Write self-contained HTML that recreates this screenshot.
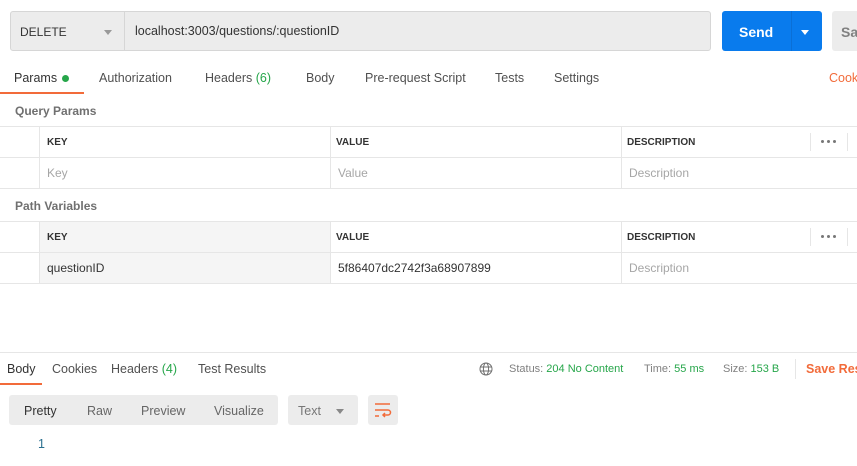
<!DOCTYPE html>
<html><head><style>
*{box-sizing:border-box;margin:0;padding:0}
body{width:857px;height:466px;overflow:hidden;background:#fff;font-family:"Liberation Sans",sans-serif;font-size:12px;color:#505050;position:relative}
.a{position:absolute;white-space:nowrap}
.hl{position:absolute;height:1px;background:#e6e6e6}
.vl{position:absolute;width:1px;background:#e6e6e6}
.th{font-size:10px;font-weight:bold;color:#333}
.ph{color:#a6a6a6}
.g{color:#26a64a}
.d{position:absolute;width:3px;height:3px;border-radius:50%;background:#777}
</style></head><body>
<div class="a" style="left:10px;top:11px;width:701px;height:40px;background:#ececec;border:1px solid #d6d6d6;border-radius:3px"></div>
<div class="vl" style="left:124px;top:12px;height:38px;background:#d6d6d6"></div>
<div class="a" style="left:20px;top:25px;font-size:12px;color:#333">DELETE</div>
<div class="a" style="left:104px;top:30px;width:0;height:0;border-left:4px solid transparent;border-right:4px solid transparent;border-top:5px solid #999"></div>
<div class="a" style="left:135px;top:24px;font-size:12.5px;color:#333">localhost:3003/questions/:questionID</div>
<div class="a" style="left:722px;top:11px;width:100px;height:40px;background:#097bed;border-radius:3px"></div>
<div class="vl" style="left:791px;top:11px;height:40px;background:#0a6fd6"></div>
<div class="a" style="left:739px;top:24px;font-size:14px;font-weight:bold;color:#fff">Send</div>
<div class="a" style="left:801px;top:30px;width:0;height:0;border-left:4.5px solid transparent;border-right:4.5px solid transparent;border-top:5px solid #fff"></div>
<div class="a" style="left:832px;top:11px;width:40px;height:40px;background:#ececec;border-radius:3px"></div>
<div class="a" style="left:841px;top:24px;font-size:14px;font-weight:bold;color:#808080">Sa</div>
<div class="a" style="left:14px;top:71px;color:#333;font-size:12.5px">Params</div>
<div class="a" style="left:62px;top:75px;width:7px;height:7px;border-radius:50%;background:#26a64a"></div>
<div class="a" style="left:0;top:92px;width:84px;height:2px;background:#f26b3a"></div>
<div class="a" style="left:99px;top:71px;font-size:12.5px">Authorization</div>
<div class="a" style="left:205px;top:71px;font-size:12.5px">Headers <span class="g">(6)</span></div>
<div class="a" style="left:306px;top:71px;font-size:12.5px">Body</div>
<div class="a" style="left:365px;top:71px;font-size:12.5px">Pre-request Script</div>
<div class="a" style="left:495px;top:71px;font-size:12.5px">Tests</div>
<div class="a" style="left:554px;top:71px;font-size:12.5px">Settings</div>
<div class="a" style="left:829px;top:71px;font-size:12.5px;color:#f26b3a">Cook</div>
<div class="a" style="left:15px;top:104px;font-weight:bold;color:#707070">Query Params</div>
<div class="hl" style="left:0;top:126px;width:857px"></div>
<div class="hl" style="left:0;top:157px;width:857px"></div>
<div class="hl" style="left:0;top:188px;width:857px"></div>
<div class="vl" style="left:39px;top:126px;height:62px"></div>
<div class="vl" style="left:330px;top:126px;height:62px"></div>
<div class="vl" style="left:621px;top:126px;height:62px"></div>
<div class="vl" style="left:810px;top:133px;height:18px"></div>
<div class="vl" style="left:847px;top:133px;height:18px"></div>
<div class="a th" style="left:47px;top:137px">KEY</div>
<div class="a th" style="left:336px;top:137px">VALUE</div>
<div class="a th" style="left:627px;top:137px">DESCRIPTION</div>
<div class="d" style="left:821px;top:140px"></div><div class="d" style="left:827px;top:140px"></div><div class="d" style="left:833px;top:140px"></div>
<div class="a ph" style="left:47px;top:166px">Key</div>
<div class="a ph" style="left:338px;top:166px">Value</div>
<div class="a ph" style="left:629px;top:166px">Description</div>
<div class="a" style="left:15px;top:199px;font-weight:bold;color:#707070">Path Variables</div>
<div class="a" style="left:40px;top:221px;width:290px;height:62px;background:#f5f5f5"></div>
<div class="hl" style="left:0;top:221px;width:857px"></div>
<div class="hl" style="left:0;top:252px;width:857px"></div>
<div class="hl" style="left:0;top:283px;width:857px"></div>
<div class="vl" style="left:39px;top:221px;height:62px"></div>
<div class="vl" style="left:330px;top:221px;height:62px"></div>
<div class="vl" style="left:621px;top:221px;height:62px"></div>
<div class="vl" style="left:810px;top:228px;height:18px"></div>
<div class="vl" style="left:847px;top:228px;height:18px"></div>
<div class="a th" style="left:47px;top:232px">KEY</div>
<div class="a th" style="left:336px;top:232px">VALUE</div>
<div class="a th" style="left:627px;top:232px">DESCRIPTION</div>
<div class="d" style="left:821px;top:235px"></div><div class="d" style="left:827px;top:235px"></div><div class="d" style="left:833px;top:235px"></div>
<div class="a" style="left:47px;top:261px;color:#333">questionID</div>
<div class="a" style="left:338px;top:261px;color:#333">5f86407dc2742f3a68907899</div>
<div class="a ph" style="left:629px;top:261px">Description</div>
<div class="hl" style="left:0;top:352px;width:857px"></div>
<div class="a" style="left:7px;top:362px;color:#333;font-size:12.5px">Body</div>
<div class="a" style="left:0;top:383px;width:42px;height:2px;background:#f26b3a"></div>
<div class="a" style="left:52px;top:362px;font-size:12.5px">Cookies</div>
<div class="a" style="left:111px;top:362px;font-size:12.5px">Headers <span class="g">(4)</span></div>
<div class="a" style="left:198px;top:362px;font-size:12.5px">Test Results</div>
<svg class="a" style="left:479px;top:362px" width="14" height="14" viewBox="0 0 14 14" fill="none" stroke="#707070" stroke-width="1"><circle cx="7" cy="7" r="6"/><ellipse cx="7" cy="7" rx="2.6" ry="6"/><path d="M1 5h12M1 9h12"/></svg>
<div class="a" style="left:509px;top:363px;font-size:11px;color:#808080">Status: <span class="g">204 No Content</span></div>
<div class="a" style="left:644px;top:363px;font-size:11px;color:#808080">Time: <span class="g">55 ms</span></div>
<div class="a" style="left:723px;top:363px;font-size:11px;color:#808080">Size: <span class="g">153 B</span></div>
<div class="vl" style="left:795px;top:359px;height:20px"></div>
<div class="a" style="left:806px;top:362px;font-size:12.5px;font-weight:bold;color:#f26b3a">Save Res</div>
<div class="a" style="left:9px;top:395px;width:269px;height:30px;background:#ececec;border-radius:3px"></div>
<div class="a" style="left:24px;top:404px;color:#333;font-size:12.5px">Pretty</div>
<div class="a" style="left:87px;top:404px;color:#666;font-size:12.5px">Raw</div>
<div class="a" style="left:141px;top:404px;color:#666;font-size:12.5px">Preview</div>
<div class="a" style="left:214px;top:404px;color:#666;font-size:12.5px">Visualize</div>
<div class="a" style="left:288px;top:395px;width:70px;height:30px;background:#ececec;border-radius:3px"></div>
<div class="a" style="left:298px;top:404px;color:#777;font-size:12.5px">Text</div>
<div class="a" style="left:336px;top:409px;width:0;height:0;border-left:4px solid transparent;border-right:4px solid transparent;border-top:5px solid #888"></div>
<div class="a" style="left:368px;top:395px;width:30px;height:30px;background:#ececec;border-radius:3px"></div>
<svg class="a" style="left:374px;top:401px" width="18" height="18" viewBox="0 0 18 18" fill="none" stroke="#f26b3a" stroke-width="1.5"><path d="M1 3h15M1 9h13a2.5 2.5 0 0 1 0 5H9M1 15h4M11 12l-2 2 2 2"/></svg>
<div class="a" style="left:38px;top:437px;color:#2a6f8f;font-size:12.5px">1</div>
</body></html>
